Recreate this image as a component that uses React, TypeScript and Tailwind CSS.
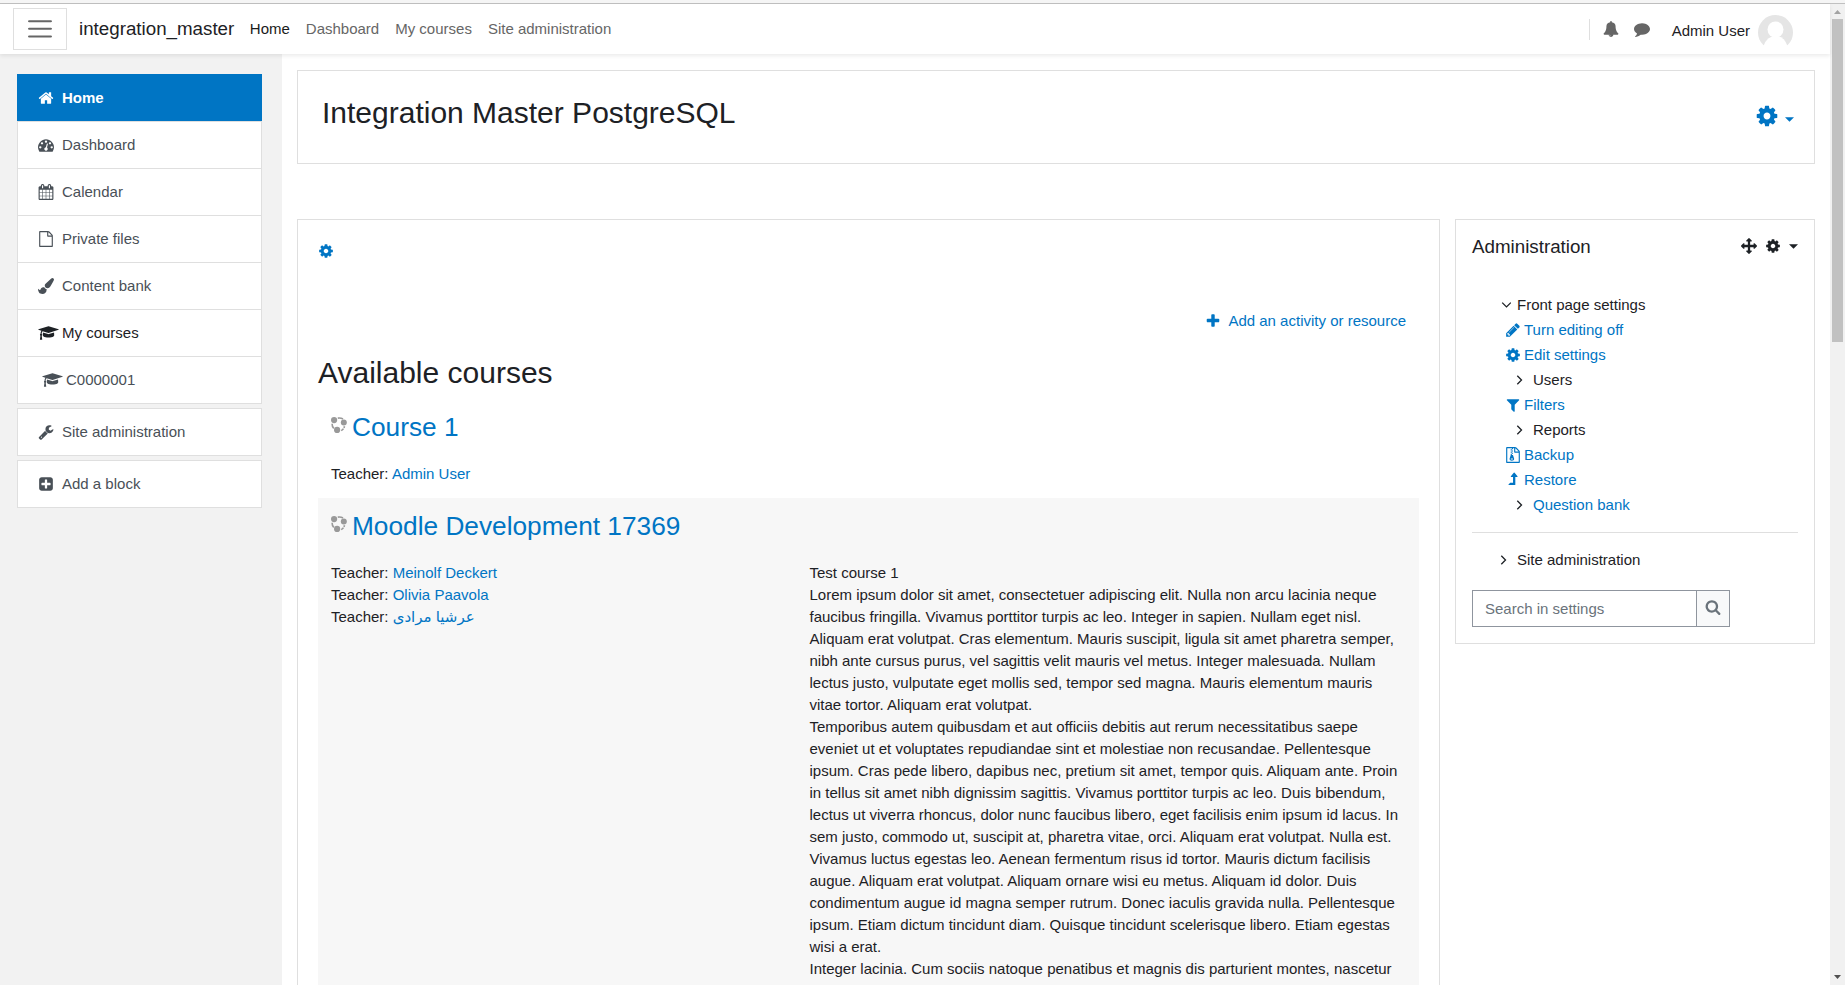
import React from 'react';

type IconProps = { d: string; className?: string; w?: number };

// Font Awesome 4 glyphs, 1792 units to the em
const Icon = ({ d, className = "h-4 w-4", w = 1792 }: IconProps) => (
  <svg viewBox={`0 0 ${w} 1792`} className={`shrink-0 fill-current ${className}`} aria-hidden="true">
    <path d={d} />
  </svg>
);

const icons = {
  home: "M1472 992v480q0 26-19 45t-45 19h-384v-384h-256v384h-384q-26 0-45-19t-19-45v-480q0-1 .5-3t.5-3l575-474 575 474q1 2 1 6zm223-69l-62 74q-8 9-21 11h-3q-13 0-21-7l-692-577-692 577q-12 8-24 7-13-2-21-11l-62-74q-8-10-7-23.5t11-21.5l719-599q32-26 76-26t76 26l244 204v-195q0-14 9-23t23-9h192q14 0 23 9t9 23v408l219 182q10 8 11 21.5t-7 23.5z",
  cog: "M1152 896q0-106-75-181t-181-75-181 75-75 181 75 181 181 75 181-75 75-181zm512-109v222q0 12-8 23t-20 13l-185 28q-19 54-39 91 35 50 107 138 10 12 10 25t-9 23q-27 37-99 108t-94 71q-12 0-26-9l-138-108q-44 23-91 38-16 136-29 186-7 28-36 28h-222q-14 0-24.5-8.5t-11.5-21.5l-28-184q-49-16-90-37l-141 107q-10 9-25 9-14 0-25-11-126-114-165-168-7-10-7-23 0-12 8-23 15-21 51-66.5t54-70.5q-27-50-41-99l-183-27q-13-2-21-12.5t-8-23.5v-222q0-12 8-23t19-13l186-28q14-46 39-92-40-57-107-138-10-12-10-24 0-10 9-23 26-36 98.5-107.5t94.5-71.5q13 0 26 10l138 107q44-23 91-38 16-136 29-186 7-28 36-28h222q14 0 24.5 8.5t11.5 21.5l28 184q49 16 90 37l142-107q9-9 24-9 13 0 25 10 129 119 165 170 7 8 7 22 0 12-8 23-15 21-51 66.5t-54 70.5q26 50 41 98l183 28q13 2 21 12.5t8 23.5z",
  dashboard: "M384 1152q0-53-37.5-90.5t-90.5-37.5-90.5 37.5-37.5 90.5 37.5 90.5 90.5 37.5 90.5-37.5 37.5-90.5zm192-448q0-53-37.5-90.5t-90.5-37.5-90.5 37.5-37.5 90.5 37.5 90.5 90.5 37.5 90.5-37.5 37.5-90.5zm428 481l101-382q6-26-7.5-48.5t-38.5-29.5-48 6.5-30 39.5l-101 382q-60 5-107 43.5t-63 98.5q-20 77 20 146t117 89 146-20 89-117q16-60-6-117t-72-91zm660-33q0-53-37.5-90.5t-90.5-37.5-90.5 37.5-37.5 90.5 37.5 90.5 90.5 37.5 90.5-37.5 37.5-90.5zm-640-640q0-53-37.5-90.5t-90.5-37.5-90.5 37.5-37.5 90.5 37.5 90.5 90.5 37.5 90.5-37.5 37.5-90.5zm448 192q0-53-37.5-90.5t-90.5-37.5-90.5 37.5-37.5 90.5 37.5 90.5 90.5 37.5 90.5-37.5 37.5-90.5zm320 448q0 261-141 483-19 29-54 29h-1402q-35 0-54-29-141-221-141-483 0-182 71-348t191-286 286-191 348-71 348 71 286 191 191 286 71 348z",
  calendar: "M192 1664h288v-288h-288v288zm352 0h320v-288h-320v288zm-352-352h288v-320h-288v320zm352 0h320v-320h-320v320zm-352-384h288v-288h-288v288zm736 736h320v-288h-320v288zm-384-736h320v-288h-320v288zm768 736h288v-288h-288v288zm-384-352h320v-320h-320v320zm-352-864v-288q0-13-9.5-22.5t-22.5-9.5h-64q-13 0-22.5 9.5t-9.5 22.5v288q0 13 9.5 22.5t22.5 9.5h64q13 0 22.5-9.5t9.5-22.5zm736 864h288v-320h-288v320zm-384-384h320v-288h-320v288zm384 0h288v-288h-288v288zm32-480v-288q0-13-9.5-22.5t-22.5-9.5h-64q-13 0-22.5 9.5t-9.5 22.5v288q0 13 9.5 22.5t22.5 9.5h64q13 0 22.5-9.5t9.5-22.5zm384-64v1280q0 52-38 90t-90 38h-1408q-52 0-90-38t-38-90v-1280q0-52 38-90t90-38h128v-96q0-66 47-113t113-47h64q66 0 113 47t47 113v96h384v-96q0-66 47-113t113-47h64q66 0 113 47t47 113v96h128q52 0 90 38t38 90z",
  file: "M1596 380q28 28 48 76t20 88v1152q0 40-28 68t-68 28h-1344q-40 0-68-28t-28-68v-1600q0-40 28-68t68-28h896q40 0 88 20t76 48zm-444-244v376h376q-10-29-22-41l-313-313q-12-12-41-22zm384 1528v-1024h-416q-40 0-68-28t-28-68v-416h-768v1536h1280z",
  brush: "M1615 0q70 0 122.5 46.5t52.5 116.5q0 63-45 151-332 629-465 752-97 91-218 91-126 0-216.5-92.5t-90.5-219.5q0-128 92-212l638-579q59-54 130-54zm-909 1034q39 76 106.5 130t150.5 76l1 71q4 213-129.5 347t-348.5 134q-123 0-218-46.5t-152.5-127.5-86.5-183-29-220q7 5 41 30t62 44.5 59 36.5 46 17q41 0 55-37 25-66 57.5-112.5t69.5-76 88-47.5 103-25.5 125-10.5z",
  graduation: "M1774 836l18 316q4 69-82 128t-235 93.5-323 34.5-323-34.5-235-93.5-82-128l18-316 574 181q22 7 48 7t48-7zm530-324q0 23-22 31l-1120 352q-4 1-10 1t-10-1l-652-206q-43 34-71 111.5t-34 178.5q63 36 63 109 0 69-58 107l58 433q2 14-8 25-9 11-24 11h-192q-15 0-24-11-10-11-8-25l58-433q-58-38-58-107 0-73 65-111 11-207 98-330l-333-104q-22-8-22-31t22-31l1120-352q4-1 10-1t10 1l1120 352q22 8 22 31z",
  wrench: "M448 1472q0-26-19-45t-45-19-45 19-19 45 19 45 45 19 45-19 19-45zm644-420l-682 682q-37 37-90 37-52 0-91-37l-106-108q-38-36-38-90 0-53 38-91l681-681q39 98 114.5 173.5t173.5 114.5zm634-435q0 39-23 106-47 134-164.5 217.5t-258.5 83.5q-185 0-316.5-131.5t-131.5-316.5 131.5-316.5 316.5-131.5q58 0 121.5 16.5t107.5 46.5q16 11 16 28t-16 28l-293 169v224l193 107q5-3 79-48.5t135.5-81 70.5-35.5q15 0 23.5 10t8.5 25z",
  plusSquare: "M1408 960v-128q0-26-19-45t-45-19h-320v-320q0-26-19-45t-45-19h-128q-26 0-45 19t-19 45v320h-320q-26 0-45 19t-19 45v128q0 26 19 45t45 19h320v320q0 26 19 45t45 19h128q26 0 45-19t19-45v-320h320q26 0 45-19t19-45zm256-544v960q0 119-84.5 203.5t-203.5 84.5h-960q-119 0-203.5-84.5t-84.5-203.5v-960q0-119 84.5-203.5t203.5-84.5h960q119 0 203.5 84.5t84.5 203.5z",
  bell: "M912 1696q0-16-16-16-59 0-101.5-42.5t-42.5-101.5q0-16-16-16t-16 16q0 73 51.5 124.5t124.5 51.5q16 0 16-16zm816-288q0 52-38 90t-90 38h-448q0 106-75 181t-181 75-181-75-75-181h-448q-52 0-90-38t-38-90q50-42 91-88t85-119.5 74.5-158.5 50-206 19.5-260q0-152 117-282.5t307-158.5q-8-19-8-39 0-40 28-68t68-28 68 28 28 68q0 20-8 39 190 28 307 158.5t117 282.5q0 139 19.5 260t50 206 74.5 158.5 85 119.5 91 88z",
  comment: "M1792 896q0 174-120 321.5t-326 233-450 85.5q-70 0-145-8-198 175-460 242-49 14-114 22-17 2-30.5-9t-17.5-29v-1q-3-4-.5-12t2-10 4.5-9.5l6-9 7-8.5 8-9q7-8 31-34.5t34.5-38 31-39.5 32.5-51 27-59 26-76q-157-89-247.5-220t-90.5-281q0-130 71-248.5t191-204.5 286-136.5 348-50.5q244 0 450 85.5t326 233 120 321.5z",
  plus: "M1600 736v192q0 40-28 68t-68 28h-416v416q0 40-28 68t-68 28h-192q-40 0-68-28t-28-68v-416h-416q-40 0-68-28t-28-68v-192q0-40 28-68t68-28h416v-416q0-40 28-68t68-28h192q40 0 68 28t28 68v416h416q40 0 68 28t28 68z",
  arrows: "M1792 896q0 26-19 45l-256 256q-19 19-45 19t-45-19-19-45v-128h-384v384h128q26 0 45 19t19 45-19 45l-256 256q-19 19-45 19t-45-19l-256-256q-19-19-19-45t19-45 45-19h128v-384h-384v128q0 26-19 45t-45 19-45-19l-256-256q-19-19-19-45t19-45l256-256q19-19 45-19t45 19 19 45v128h384v-384h-128q-26 0-45-19t-19-45 19-45l256-256q19-19 45-19t45 19l256 256q19 19 19 45t-19 45-45 19h-128v384h384v-128q0-26 19-45t45-19 45 19l256 256q19 19 19 45z",
  pencil: "M491 1536l91-91-235-235-91 91v107h128v128h107zm523-928q0-22-22-22-10 0-17 7l-542 542q-7 7-7 17 0 22 22 22 10 0 17-7l542-542q7-7 7-17zm-54-192l416 416-832 832h-416v-416zm683 96q0 53-37 90l-166 166-416-416 166-165q36-38 90-38 53 0 91 38l235 234q37 39 37 91z",
  filter: "M1595 295q17 41-14 70l-493 493v742q0 42-39 59-13 5-25 5-27 0-45-19l-256-256q-19-19-19-45v-486l-493-493q-31-29-14-70 17-39 59-39h1280q42 0 59 39z",
  zip: "M768 384v-128h-128v128h128zm128 128v-128h-128v128h128zm-128 128v-128h-128v128h128zm128 128v-128h-128v128h128zm700-388q28 28 48 76t20 88v1152q0 40-28 68t-68 28h-1344q-40 0-68-28t-28-68v-1600q0-40 28-68t68-28h896q40 0 88 20t76 48zm-444-244v376h376q-10-29-22-41l-313-313q-12-12-41-22zm384 1528v-1024h-416q-40 0-68-28t-28-68v-416h-128v128h-128v-128h-512v1536h1280zm-627-721l107 349q8 27 8 52 0 83-72.5 137.5t-183.5 54.5-183.5-54.5-72.5-137.5q0-25 8-52 21-63 120-396v-128h128v128h79q22 0 39 13t23 34zm-141 465q53 0 90.5-19t37.5-45-37.5-45-90.5-19-90.5 19-37.5 45 37.5 45 90.5 19z",
  levelUp: "M1405 531q-19 37-57 37h-192v864q0 14-9 23t-23 9h-704q-21 0-29-18-8-20 4-35l160-192q9-11 25-11h320v-640h-192q-40 0-58-37-17-37 9-68l320-384q18-22 49-22t49 22l320 384q27 32 8 68z",
  search: "M1216 832q0-185-131.5-316.5t-316.5-131.5-316.5 131.5-131.5 316.5 131.5 316.5 316.5 131.5 316.5-131.5 131.5-316.5zm512 832q0 52-38 90t-90 38q-54 0-90-38l-343-342q-179 124-399 124-143 0-273.5-55.5t-225-150-150-225-55.5-273.5 55.5-273.5 150-225 225-150 273.5-55.5 273.5 55.5 225 150 150 225 55.5 273.5q0 220-124 399l343 343q37 37 37 90z",
};

const Angle = ({ down = false }: { down?: boolean }) => (
  <svg viewBox="0 0 10 10" className="h-[10px] w-[10px] shrink-0" fill="none" stroke="currentColor" strokeWidth="1.3">
    <path d={down ? "M1.2 2.6 5.5 6.9 9.8 2.6" : "M3.3.8 7.5 5 3.3 9.2"} />
  </svg>
);

const Caret = ({ className = "" }: { className?: string }) => (
  <svg viewBox="0 0 10 5" className={`h-[5px] w-[9px] shrink-0 fill-current ${className}`}>
    <path d="M0 0h10L5 5z" />
  </svg>
);

const CourseIcon = () => (
  <svg viewBox="0 0 16 16" className="mt-[6px] h-4 w-4 shrink-0" fill="#999">
    <circle cx="3.1" cy="3.1" r="3.1" />
    <circle cx="12.8" cy="5.4" r="3" />
    <circle cx="6.1" cy="12.9" r="3.1" />
    <g fill="none" stroke="#999" strokeWidth="1.6">
      <path d="M6.8 1.1Q9.8.6 12 2" />
      <path d="M1.1 6.8Q1 9.4 2.8 11.4" />
      <path d="M10.2 13.6Q12.8 12.2 13.5 9.2" strokeDasharray="3 .8" />
    </g>
  </svg>
);

const navItems = [
  { label: "Home", icon: icons.home, row: "-mt-px border-[#0075c4] bg-[#0075c4] font-bold text-white" },
  { label: "Dashboard", icon: icons.dashboard, row: "-mt-px border-[#dfdfdf] bg-white" },
  { label: "Calendar", icon: icons.calendar, row: "-mt-px border-[#dfdfdf] bg-white" },
  { label: "Private files", icon: icons.file, row: "-mt-px border-[#dfdfdf] bg-white" },
  { label: "Content bank", icon: icons.brush, row: "-mt-px border-[#dfdfdf] bg-white" },
  { label: "My courses", icon: icons.graduation, wide: true, row: "-mt-px border-[#dfdfdf] bg-white text-[#1d2125]" },
  { label: "C0000001", icon: icons.graduation, wide: true, row: "-mt-px border-[#dfdfdf] bg-white pl-6" },
  { label: "Site administration", icon: icons.wrench, row: "mt-1 border-[#dfdfdf] bg-white" },
  { label: "Add a block", icon: icons.plusSquare, row: "mt-1 border-[#dfdfdf] bg-white" },
];

const adminTree = [
  { label: "Turn editing off", icon: icons.pencil, link: true },
  { label: "Edit settings", icon: icons.cog, link: true },
  { label: "Users" },
  { label: "Filters", icon: icons.filter, link: true },
  { label: "Reports" },
  { label: "Backup", icon: icons.zip, link: true },
  { label: "Restore", icon: icons.levelUp, link: true },
  { label: "Question bank", link: true },
];

const summary = [
  "Test course 1",
  "Lorem ipsum dolor sit amet, consectetuer adipiscing elit. Nulla non arcu lacinia neque",
  "faucibus fringilla. Vivamus porttitor turpis ac leo. Integer in sapien. Nullam eget nisl.",
  "Aliquam erat volutpat. Cras elementum. Mauris suscipit, ligula sit amet pharetra semper,",
  "nibh ante cursus purus, vel sagittis velit mauris vel metus. Integer malesuada. Nullam",
  "lectus justo, vulputate eget mollis sed, tempor sed magna. Mauris elementum mauris",
  "vitae tortor. Aliquam erat volutpat.",
  "Temporibus autem quibusdam et aut officiis debitis aut rerum necessitatibus saepe",
  "eveniet ut et voluptates repudiandae sint et molestiae non recusandae. Pellentesque",
  "ipsum. Cras pede libero, dapibus nec, pretium sit amet, tempor quis. Aliquam ante. Proin",
  "in tellus sit amet nibh dignissim sagittis. Vivamus porttitor turpis ac leo. Duis bibendum,",
  "lectus ut viverra rhoncus, dolor nunc faucibus libero, eget facilisis enim ipsum id lacus. In",
  "sem justo, commodo ut, suscipit at, pharetra vitae, orci. Aliquam erat volutpat. Nulla est.",
  "Vivamus luctus egestas leo. Aenean fermentum risus id tortor. Mauris dictum facilisis",
  "augue. Aliquam erat volutpat. Aliquam ornare wisi eu metus. Aliquam id dolor. Duis",
  "condimentum augue id magna semper rutrum. Donec iaculis gravida nulla. Pellentesque",
  "ipsum. Etiam dictum tincidunt diam. Quisque tincidunt scelerisque libero. Etiam egestas",
  "wisi a erat.",
  "Integer lacinia. Cum sociis natoque penatibus et magnis dis parturient montes, nascetur",
];

const Teacher = ({ name }: { name: string }) => (
  <li>Teacher: <a className="text-[#0075c4]">{name}</a></li>
);

export default function App() {
  return (
    <div className="flex h-[985px] flex-col overflow-hidden bg-white font-['Liberation_Sans',Arial,'DejaVu_Sans',sans-serif] text-[15px] leading-[22px] text-[#1d2125]">
      <div className="h-1 shrink-0 border-b border-[#c0c0c0] bg-[#f5f5f5]" />
      <div className="flex min-h-0 flex-1">
        <div className="flex min-w-0 flex-1 flex-col">
          <header className="relative z-20 flex h-[50px] shrink-0 items-center bg-white shadow-[0_2px_4px_rgba(0,0,0,0.08)]">
            <button className="ml-[13px] flex h-[42px] w-[54px] items-center justify-center border border-[#dfdfdf]">
              <svg viewBox="0 0 24 20" className="h-5 w-6" stroke="#666" strokeWidth="2" strokeLinecap="round">
                <path d="M3 2.2h18M3 9.8h18M3 17.4h18" transform="translate(-2.4) scale(1.2 1)" />
              </svg>
            </button>
            <span className="ml-3 text-[18.75px]">integration_master</span>
            <nav className="ml-[15.5px] flex gap-4 text-[#666]">
              <a className="text-[#1a1a1a]">Home</a>
              <a>Dashboard</a>
              <a>My courses</a>
              <a>Site administration</a>
            </nav>
            <div className="ml-auto flex items-center text-[#666]">
              <div className="h-[21px] w-px bg-[#dfdfdf]" />
              <Icon d={icons.bell} className="ml-[13px] h-4 w-4" />
              <Icon d={icons.comment} className="ml-[15.5px] h-4 w-4" />
              <span className="mt-1 ml-[21.5px] text-[#1d2125]">Admin User</span>
              <svg viewBox="0 0 35 35" className="mt-[7px] mr-[37px] ml-2 h-[35px] w-[35px]">
                <circle cx="17.5" cy="17.5" r="17.5" fill="#e5e5e5" />
                <circle cx="17.5" cy="14.5" r="8" fill="#fff" />
                <path d="M5.5 31Q9 21 17.5 21T29.5 31L27 35H8z" fill="#fff" />
              </svg>
            </div>
          </header>

          <div className="flex min-h-0 flex-1">
            <aside className="w-[282px] shrink-0 bg-[#f2f2f2] pt-5 pl-[17px]">
              <ul className="w-[245px] pt-px text-[#495057]">
                {navItems.map((item) => (
                  <li key={item.label} className={`relative flex h-12 items-center border pl-5 ${item.row}`}>
                    <span className="flex w-6 shrink-0">
                      <Icon
                        d={item.icon}
                        w={item.wide ? 2304 : 1792}
                        className={item.wide ? "h-4 w-[21px]" : "h-4 w-4"}
                      />
                    </span>
                    {item.label}
                  </li>
                ))}
              </ul>
            </aside>

            <main className="flex min-w-0 flex-1 flex-col pt-4 pr-[15px] pl-[15px]">
              <div className="flex h-[94px] shrink-0 justify-between border border-[#dfdfdf] pr-5 pl-6">
                <h1 className="mt-[24px] text-[30px] leading-9">Integration Master PostgreSQL</h1>
                <div className="mt-[33px] flex h-6 items-center text-[#0075c4]">
                  <Icon d={icons.cog} className="h-6 w-6" />
                  <Caret className="mt-[6px] ml-[6px]" />
                </div>
              </div>

              <div className="mt-[55px] flex min-h-0 flex-1 items-start gap-[15px]">
                <section className="h-full min-w-0 flex-1 overflow-hidden border border-b-0 border-[#dfdfdf] px-5 pt-[23px]">
                  <Icon d={icons.cog} className="h-4 w-4 text-[#0075c4]" />
                  <div className="mt-[51px] mr-[13px] flex items-center justify-end text-[#0075c4]">
                    <Icon d={icons.plus} className="mr-[7.5px] h-4 w-4" />
                    Add an activity or resource
                  </div>
                  <h2 className="mt-[23px] text-[30px] leading-9">Available courses</h2>

                  <article className="mt-2 h-[99px] px-[13px] pt-3">
                    <h3 className="flex gap-[5px] text-[26.25px] leading-8 text-[#0075c4]"><CourseIcon />Course 1</h3>
                    <ul className="mt-[20px]">
                      <Teacher name="Admin User" />
                    </ul>
                  </article>

                  <article className="h-[700px] bg-[#f7f7f7] px-[13px] pt-3">
                    <h3 className="flex gap-[5px] text-[26.25px] leading-8 text-[#0075c4]"><CourseIcon />Moodle Development 17369</h3>
                    <div className="mt-[20px] flex">
                      <ul className="w-[478.5px] shrink-0">
                        <Teacher name="Meinolf Deckert" />
                        <Teacher name="Olivia Paavola" />
                        <Teacher name="عرشیا مرادی" />
                      </ul>
                      <div className="whitespace-nowrap">
                        {summary.map((line) => <p key={line}>{line}</p>)}
                      </div>
                    </div>
                  </article>
                </section>

                <section className="h-[425px] w-[360px] shrink-0 border border-[#dfdfdf] px-4 pt-[15px]">
                  <div className="flex h-[22px] items-center">
                    <h5 className="pt-0.5 text-[18.75px]">Administration</h5>
                    <Icon d={icons.arrows} className="ml-auto h-4 w-4" />
                    <Icon d={icons.cog} className="ml-2 h-4 w-4" />
                    <Caret className="ml-2" />
                  </div>

                  <div className="mt-[35px] flex h-[25px] items-center pl-[29px]">
                    <span className="flex w-4"><Angle down /></span>
                    Front page settings
                  </div>
                  <ul>
                    {adminTree.map((node) => (
                      <li key={node.label} className={`flex h-[25px] items-center ${node.link ? "text-[#0075c4]" : ""} ${node.icon ? "pl-[32.6px]" : "pl-[42px]"}`}>
                        {node.icon ? (
                          <Icon d={node.icon} className="mr-[3.4px] h-4 w-4" />
                        ) : (
                          <span className="flex w-[19px] text-[#1d2125]"><Angle /></span>
                        )}
                        {node.label}
                      </li>
                    ))}
                  </ul>
                  <hr className="mt-[15px] border-[#dfdfdf]" />
                  <div className="mt-[14px] flex h-[25px] items-center pl-[26px]">
                    <span className="flex w-[19px]"><Angle /></span>
                    Site administration
                  </div>
                  <div className="mt-[18px] flex h-[37px] w-[258px] border border-[#8f959e]">
                    <div className="flex-1 pt-[7px] pl-3 text-[#6a737b]">Search in settings</div>
                    <button className="flex w-[33px] items-center justify-center border-l border-[#8f959e] bg-[#f8f9fa] text-[#6a737b]">
                      <Icon d={icons.search} className="mb-[3px] h-4 w-4" />
                    </button>
                  </div>
                </section>
              </div>
            </main>
          </div>
        </div>

        {/* page scrollbar */}
        <div className="flex w-[15px] shrink-0 flex-col items-center bg-[#f1f1f1]">
          <svg viewBox="0 0 7 4" className="mt-[6px] h-1 w-[7px] fill-[#a3a3a3]"><path d="M0 4 3.5 0 7 4z" /></svg>
          <div className="mt-[5px] h-[323px] w-[11px] bg-[#c1c1c1]" />
          <svg viewBox="0 0 7 4" className="mt-auto mb-[6px] h-1 w-[7px] fill-[#505050]"><path d="M0 0h7L3.5 4z" /></svg>
        </div>
      </div>
    </div>
  );
}
